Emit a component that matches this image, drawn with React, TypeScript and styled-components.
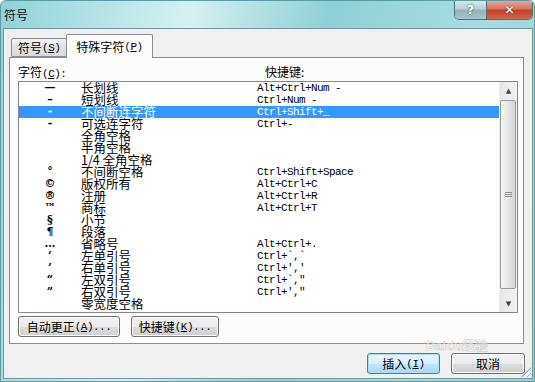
import * as React from 'react';
import styled, { createGlobalStyle } from 'styled-components';

const UI_FONT = '"Noto Sans CJK SC", "Liberation Sans", sans-serif';
const MONO_FONT = '"Liberation Mono", "Noto Sans CJK SC", monospace';

type Row = {
  symbol: string,
  name: string,
  keys: string,
};

const ROWS: Row[] = [
  { symbol: '—', name: '长划线', keys: 'Alt+Ctrl+Num -' },
  { symbol: '–', name: '短划线', keys: 'Ctrl+Num -' },
  { symbol: '-', name: '不间断连字符', keys: 'Ctrl+Shift+_' },
  { symbol: '-', name: '可选连字符', keys: 'Ctrl+-' },
  { symbol: '', name: '全角空格', keys: '' },
  { symbol: '', name: '半角空格', keys: '' },
  { symbol: '', name: '1/4 全角空格', keys: '' },
  { symbol: '°', name: '不间断空格', keys: 'Ctrl+Shift+Space' },
  { symbol: '©', name: '版权所有', keys: 'Alt+Ctrl+C' },
  { symbol: '®', name: '注册', keys: 'Alt+Ctrl+R' },
  { symbol: '™', name: '商标', keys: 'Alt+Ctrl+T' },
  { symbol: '§', name: '小节', keys: '' },
  { symbol: '¶', name: '段落', keys: '' },
  { symbol: '…', name: '省略号', keys: 'Alt+Ctrl+.' },
  { symbol: '‘', name: '左单引号', keys: 'Ctrl+`,`' },
  { symbol: '’', name: '右单引号', keys: "Ctrl+','" },
  { symbol: '“', name: '左双引号', keys: 'Ctrl+`,"' },
  { symbol: '”', name: '右双引号', keys: "Ctrl+',\"" },
  { symbol: '', name: '零宽度空格', keys: '' },
];

const SELECTED = 2;

const GlobalStyle = createGlobalStyle`
  html, body {
    margin: 0;
    padding: 0;
    background: #fff;
  }
  body {
    font-family: ${UI_FONT};
    font-size: 12px;
    color: #000;
  }
`;

const Window = styled.div`
  position: relative;
  width: 535px;
  height: 382px;
  box-sizing: border-box;
  display: flex;
  flex-direction: column;
  overflow: hidden;
  background: linear-gradient(100deg, #8fd2d6 0%, #bfe9eb 22%, #d4f1f2 32%, #8fd0d4 55%, #a6dde0 80%, #94d3d7 100%);
  border: 1px solid #5a9ea3;
  border-radius: 6px 6px 0 0;
`;

const TitleBar = styled.div`
  height: 27px;
  display: flex;
  justify-content: space-between;
  align-items: flex-start;
  padding-left: 3px;
`;

const Title = styled.span`
  line-height: 28px;
  font-size: 12px;
  color: #111;
`;

const Caption = styled.div`
  display: flex;
  margin-right: 1px;
  margin-top: -1px;
  border: 1px solid #4a7378;
  border-top: none;
  border-radius: 0 0 5px 5px;
  overflow: hidden;
`;

const CaptionButton = styled.div<{ $close?: boolean }>`
  width: ${p => (p.$close ? 45 : 31)}px;
  height: 19px;
  display: flex;
  align-items: center;
  justify-content: center;
  font-family: "DejaVu Sans", sans-serif;
  font-weight: bold;
  font-size: 12px;
  color: #fff;
  text-shadow: 0 0 2px #333;
  background: ${p => (p.$close
    ? 'linear-gradient(#e9a99b 0%, #d87762 45%, #c2432c 55%, #d6624b 100%)'
    : 'linear-gradient(#dbe9eb 0%, #b9d2d5 45%, #94b4b9 55%, #a9c6ca 100%)')};
  & + & {
    border-left: 1px solid #4a7378;
  }
`;

const Client = styled.div`
  position: relative;
  flex: 1;
  margin: 0 1px 2px 2px;
  display: flex;
  flex-direction: column;
  background: #f0f0f0;
  border: 1px solid #6e989d;
`;

const TabStrip = styled.div`
  height: 28px;
  display: flex;
  align-items: flex-end;
  padding-left: 7px;
  box-sizing: border-box;
`;

const Tab = styled.div<{ $active?: boolean }>`
  position: relative;
  z-index: ${p => (p.$active ? 2 : 1)};
  height: ${p => (p.$active ? 24 : 19)}px;
  margin-bottom: ${p => (p.$active ? -1 : 0)}px;
  margin-left: ${p => (p.$active ? -1 : 0)}px;
  padding: 0 ${p => (p.$active ? 9 : 6)}px;
  box-sizing: border-box;
  display: flex;
  align-items: center;
  border: 1px solid #898c95;
  border-bottom: ${p => (p.$active ? 'none' : '1px solid #898c95')};
  border-radius: 2px 2px 0 0;
  background: ${p => (p.$active ? '#fcfcfc' : 'linear-gradient(#f3f3f3, #e3e3e3 50%, #d9d9d9)')};
  font-size: 12px;
  line-height: 14px;
  padding-top: ${p => (p.$active ? 0 : 1)}px;
`;

const Key = styled.span`
  font-family: ${MONO_FONT};
  font-size: 11px;
  letter-spacing: -0.5px;
  & u {
    text-underline-offset: 1px;
  }
`;

const TabPage = styled.div`
  width: 515px;
  height: 287px;
  margin-left: 5px;
  box-sizing: border-box;
  border: 1px solid #898c95;
  background: #fcfcfc;
  padding: 6px 0 0 8px;
  display: flex;
  flex-direction: column;
`;

const LabelRow = styled.div`
  height: 17px;
  display: grid;
  grid-template-columns: 247px 1fr;
  font-size: 12px;
  line-height: 16px;
`;

const ListBox = styled.div`
  width: 500px;
  height: 232px;
  box-sizing: border-box;
  border: 1px solid #828790;
  background: #fff;
  display: flex;
`;

const Rows = styled.div`
  flex: 1;
  display: flex;
  flex-direction: column;
`;

const ListRow = styled.div<{ $selected?: boolean }>`
  height: 12px;
  display: grid;
  grid-template-columns: 62px 176px 1fr;
  align-items: center;
  background: ${p => (p.$selected ? '#3399ff' : 'transparent')};
  color: ${p => (p.$selected ? '#fff' : '#000')};
`;

const SymbolCell = styled.span`
  text-align: center;
  font-family: "DejaVu Serif", "Liberation Serif", serif;
  font-weight: bold;
  font-size: 11px;
  line-height: 12px;
`;

const NameCell = styled.span`
  font-size: 12.5px;
  line-height: 12px;
  white-space: nowrap;
`;

const KeysCell = styled.span`
  font-family: ${MONO_FONT};
  font-size: 11px;
  letter-spacing: -0.6px;
  line-height: 12px;
  white-space: pre;
`;

const ScrollBar = styled.div`
  width: 17px;
  display: flex;
  flex-direction: column;
  background: linear-gradient(90deg, #e6e6e6, #f2f2f2);
  border-left: 1px solid #ececec;
`;

const Arrow = styled.div`
  height: 17px;
  display: flex;
  align-items: center;
  justify-content: center;
  font-size: 7px;
  color: #444;
  font-family: "DejaVu Sans", sans-serif;
`;

const Thumb = styled.div`
  height: 189px;
  margin: 1px 1px 0 0;
  box-sizing: border-box;
  border: 1px solid #9a9a9a;
  border-radius: 2px;
  background: linear-gradient(90deg, #f5f5f5, #e6e6e6 50%, #d6d6d6);
  display: flex;
  align-items: center;
  justify-content: center;
`;

const Grip = styled.div`
  width: 7px;
  height: 5px;
  background: repeating-linear-gradient(#8d8d8d 0 1px, transparent 1px 2px);
`;

const Track = styled.div`
  flex: 1;
`;

const ButtonRow = styled.div<{ $end?: boolean }>`
  display: flex;
  gap: 11px;
  justify-content: ${p => (p.$end ? 'flex-end' : 'flex-start')};
  margin-top: ${p => (p.$end ? 9 : 3)}px;
  padding-right: ${p => (p.$end ? 7 : 0)}px;
`;

const Button = styled.button<{ $width: number, $default?: boolean }>`
  width: ${p => p.$width}px;
  height: 21px;
  padding: 0;
  display: flex;
  align-items: center;
  justify-content: center;
  border: 1px solid ${p => (p.$default ? '#3c7fb1' : '#707070')};
  border-radius: 3px;
  box-shadow: inset 0 0 0 1px ${p => (p.$default ? '#a9dcf7' : '#fbfbfb')};
  background: ${p => (p.$default
    ? 'linear-gradient(#eaf6fd 0%, #d9f0fc 50%, #bee6fd 51%, #a7d9f5 100%)'
    : 'linear-gradient(#f2f2f2 0%, #ebebeb 50%, #dddddd 51%, #cfcfcf 100%)')};
  font-family: ${UI_FONT};
  font-size: 12px;
  color: #000;
`;

/* faint site watermark that sits over the lower right corner */
const Watermark = styled.div`
  position: absolute;
  right: 44px;
  bottom: 26px;
  font-family: "Liberation Sans", "Noto Sans CJK SC", sans-serif;
  font-size: 13px;
  line-height: 13px;
  font-weight: bold;
  color: rgba(255, 255, 255, 0.6);
  -webkit-text-stroke: 0.6px rgba(170, 170, 170, 0.5);
  pointer-events: none;
`;

const ResizeGrip = styled.div`
  position: absolute;
  right: 1px;
  bottom: 1px;
  width: 10px;
  height: 10px;
  background: repeating-linear-gradient(135deg, transparent 0 3px, #9ab 3px 4px);
  clip-path: polygon(100% 0, 100% 100%, 0 100%);
`;

const Accel = ({ label, letter }: { label: string, letter: string }): React.ReactElement => (
  <>
    {label}
    <Key>(<u>{letter}</u>)</Key>
  </>
);

const App = (): React.ReactElement => (
  <>
    <GlobalStyle />
    <Window>
      <TitleBar>
        <Title>符号</Title>
        <Caption>
          <CaptionButton>?</CaptionButton>
          <CaptionButton $close>✕</CaptionButton>
        </Caption>
      </TitleBar>
      <Client>
        <TabStrip>
          <Tab><Accel label="符号" letter="S" /></Tab>
          <Tab $active><Accel label="特殊字符" letter="P" /></Tab>
        </TabStrip>
        <TabPage>
          <LabelRow>
            <span>字符<Key>(<u>C</u>):</Key></span>
            <span>快捷键:</span>
          </LabelRow>
          <ListBox>
            <Rows>
              {ROWS.map((row, i) => (
                <ListRow key={row.name} $selected={i === SELECTED}>
                  <SymbolCell>{row.symbol}</SymbolCell>
                  <NameCell>{row.name}</NameCell>
                  <KeysCell>{row.keys}</KeysCell>
                </ListRow>
              ))}
            </Rows>
            <ScrollBar>
              <Arrow>▲</Arrow>
              <Thumb><Grip /></Thumb>
              <Track />
              <Arrow>▼</Arrow>
            </ScrollBar>
          </ListBox>
          <ButtonRow>
            <Button $width={102}><Accel label="自动更正" letter="A" /><Key>...</Key></Button>
            <Button $width={88}><Accel label="快捷键" letter="K" /><Key>...</Key></Button>
          </ButtonRow>
        </TabPage>
        <ButtonRow $end>
          <Button $width={73} $default><Accel label="插入" letter="I" /></Button>
          <Button $width={74}>取消</Button>
        </ButtonRow>
        <Watermark>Baidu经验</Watermark>
        <ResizeGrip />
      </Client>
    </Window>
  </>
);

export default App;
